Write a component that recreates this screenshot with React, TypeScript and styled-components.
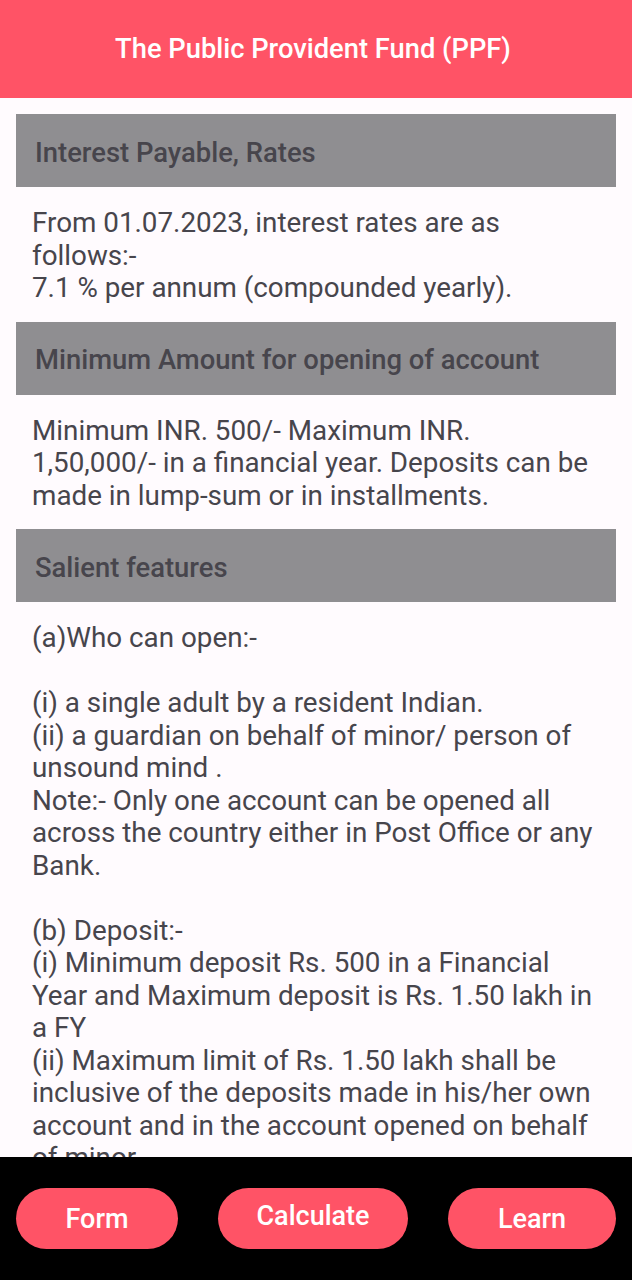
import React from "react";
import styled, { createGlobalStyle } from "styled-components";

const GlobalStyle = createGlobalStyle`
  html, body {
    margin: 0;
    padding: 0;
    background: #fffbfe;
  }
  body {
    font-family: Roboto, "Liberation Sans", sans-serif;
  }
`;

type Section = {
  title: string;
  lines: string[];
};

const sections: Section[] = [
  {
    title: "Interest Payable, Rates",
    lines: [
      "From 01.07.2023, interest rates are as follows:-",
      "7.1 % per annum (compounded yearly).",
    ],
  },
  {
    title: "Minimum Amount for opening of account",
    lines: [
      "Minimum INR. 500/- Maximum INR. 1,50,000/- in a financial year. Deposits can be made in lump-sum or in installments.",
    ],
  },
  {
    title: "Salient features",
    lines: [
      "(a)Who can open:-",
      "",
      "(i) a single adult by a resident Indian.",
      "(ii) a guardian on behalf of minor/ person of unsound mind .",
      "Note:- Only one account can be opened all across the country either in Post Office or any Bank.",
      "",
      "(b) Deposit:-",
      "(i) Minimum deposit Rs. 500 in a Financial Year and Maximum deposit is Rs. 1.50 lakh in a FY",
      "(ii) Maximum limit of Rs. 1.50 lakh shall be inclusive of the deposits made in his/her own account and in the account opened on behalf of minor.",
    ],
  },
];

const App = () => {
  return (
    <>
      <GlobalStyle />
      <Screen>
        <TopBar>
          <Title>The Public Provident Fund (PPF)</Title>
        </TopBar>
        <Content>
          {sections.map((s) => (
            <div key={s.title}>
              <SectionHead>{s.title}</SectionHead>
              <Body>
                {s.lines.map((l, i) =>
                  l === "" ? <Blank key={i} /> : <Line key={i}>{l}</Line>
                )}
              </Body>
            </div>
          ))}
        </Content>
        <BottomBar>
          <NavButton $w={162}>Form</NavButton>
          <NavButton $w={190} $lift>
            Calculate
          </NavButton>
          <NavButton $w={168}>Learn</NavButton>
        </BottomBar>
      </Screen>
    </>
  );
};

export default App;

const Screen = styled.div`
  width: 632px;
  height: 1280px;
  display: flex;
  flex-direction: column;
  background: #fffbfe;
  overflow: hidden;
`;

const TopBar = styled.header`
  height: 98px;
  flex-shrink: 0;
  background: #ff5366;
  display: flex;
  align-items: center;
  justify-content: center;
`;

const Title = styled.h1`
  margin: 0 0 0 -6px;
  font-size: 27.3px;
  font-weight: 500;
  color: #ffffff;
`;

const Content = styled.main`
  flex: 1;
  overflow: hidden;
  padding: 16px 16px 0;
`;

const SectionHead = styled.div`
  height: 73px;
  background: #8f8e91;
  display: flex;
  align-items: center;
  padding: 4px 0 0 19px;
  box-sizing: border-box;
  font-size: 27.4px;
  font-weight: 500;
  color: #47454c;
`;

const Body = styled.div`
  padding: 20px 16px 17px;
  color: #47454c;
  font-size: 27.8px;
  line-height: 32.5px;
`;

const Line = styled.p`
  margin: 0;
`;

const Blank = styled.div`
  height: 32.5px;
`;

const BottomBar = styled.nav`
  height: 123px;
  flex-shrink: 0;
  background: #000000;
  display: flex;
  align-items: flex-start;
  justify-content: space-between;
  padding: 31px 16px 0;
  box-sizing: border-box;
`;

const NavButton = styled.button<{ $w: number; $lift?: boolean }>`
  width: ${(p) => p.$w}px;
  height: 61px;
  border: none;
  border-radius: 31px;
  background: #ff5366;
  color: #ffffff;
  font-family: Roboto, "Liberation Sans", sans-serif;
  font-size: 27px;
  font-weight: 500;
  padding: ${(p) => (p.$lift ? "0 0 6px" : "0")};
  cursor: pointer;
`;
